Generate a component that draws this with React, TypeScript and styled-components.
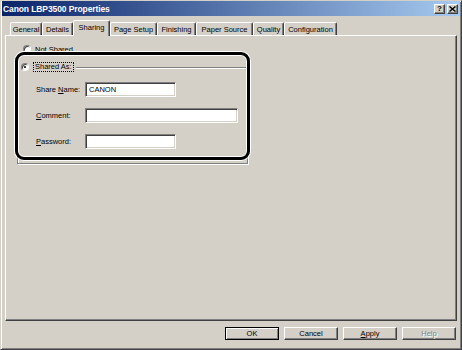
import styled, { createGlobalStyle } from "styled-components";

const GlobalStyle = createGlobalStyle`
  html, body {
    margin: 0;
    padding: 0;
    background: #d4d0c8;
  }
  body {
    font-family: "Liberation Sans", Arial, sans-serif;
    font-size: 7.5px;
    color: #000;
  }
`;

const tabs = [
  { label: "General", w: 32 },
  { label: "Details", w: 31 },
  { label: "Sharing", w: 37, active: true },
  { label: "Page Setup", w: 47 },
  { label: "Finishing", w: 39 },
  { label: "Paper Source", w: 57 },
  { label: "Quality", w: 31 },
  { label: "Configuration", w: 53 },
];

const App = () => {
  return (
    <>
      <GlobalStyle />
      <Window>
        <TitleBar>
          <Title>Canon LBP3500 Properties</Title>
          <TitleButtons>
            <CaptionButton>?</CaptionButton>
            <CaptionButton>
              <svg width="7" height="6" viewBox="0 0 7 6">
                <path d="M0.5 0.5 L6.5 5.5 M6.5 0.5 L0.5 5.5" stroke="#000" strokeWidth="1.4" />
              </svg>
            </CaptionButton>
          </TitleButtons>
        </TitleBar>

        <TabRow>
          {tabs.map((t) => (
            <Tab key={t.label} $w={t.w} $active={!!t.active}>
              {t.label}
            </Tab>
          ))}
        </TabRow>

        <Panel>
          <RadioRow>
            <Radio />
            <span>Not Shared</span>
          </RadioRow>

          <Group>
            <Legend>
              <Radio $checked />
              <Focus>Shared As:</Focus>
            </Legend>
            <FieldGrid>
              <FieldLabel>
                Share <u>N</u>ame:
              </FieldLabel>
              <TextBox $w={91}>CANON</TextBox>
              <FieldLabel>
                <u>C</u>omment:
              </FieldLabel>
              <TextBox $w={153} />
              <FieldLabel>
                <u>P</u>assword:
              </FieldLabel>
              <TextBox $w={91} />
            </FieldGrid>
          </Group>

          <Callout />
        </Panel>

        <ButtonRow>
          <Button $default>OK</Button>
          <Button>Cancel</Button>
          <Button>
            <u>A</u>pply
          </Button>
          <Button $disabled>Help</Button>
        </ButtonRow>
      </Window>
    </>
  );
};

const Window = styled.div`
  width: 462px;
  height: 350px;
  box-sizing: border-box;
  background: #d4d0c8;
  border: 1px solid;
  border-color: #d4d0c8 #404040 #404040 #d4d0c8;
  box-shadow: inset 1px 1px 0 #ffffff, inset -1px -1px 0 #808080;
  padding: 0 1px 1px 1px;
  display: flex;
  flex-direction: column;
`;

const TitleBar = styled.div`
  height: 15px;
  display: flex;
  align-items: center;
  padding: 0 2px 0 1px;
  background: linear-gradient(to right, #0a246a, #a6caf0);
`;

const Title = styled.div`
  color: #fff;
  font-weight: bold;
  font-size: 8.5px;
  letter-spacing: -0.1px;
`;

const TitleButtons = styled.div`
  margin-left: auto;
  display: flex;
  gap: 2px;
`;

const CaptionButton = styled.div`
  width: 11px;
  height: 10px;
  box-sizing: border-box;
  background: #d4d0c8;
  border: 1px solid;
  border-color: #fff #404040 #404040 #fff;
  box-shadow: inset -1px -1px 0 #808080;
  display: flex;
  align-items: center;
  justify-content: center;
  font-weight: bold;
  font-size: 8px;
  line-height: 1;
`;

const TabRow = styled.div`
  margin-top: 4px;
  padding-left: 8px;
  height: 15px;
  display: flex;
  align-items: flex-end;
  position: relative;
  z-index: 1;
`;

const Tab = styled.div<{ $w: number; $active: boolean }>`
  width: ${(p) => p.$w}px;
  height: ${(p) => (p.$active ? 16 : 13)}px;
  margin-bottom: ${(p) => (p.$active ? -1 : 0)}px;
  box-sizing: border-box;
  background: #d4d0c8;
  border: 1px solid;
  border-bottom: none;
  border-color: #fff #404040 transparent #fff;
  border-radius: 2px 2px 0 0;
  box-shadow: inset -1px 0 0 #808080;
  display: flex;
  align-items: ${(p) => (p.$active ? "flex-start" : "center")};
  padding-top: ${(p) => (p.$active ? 2 : 0)}px;
  justify-content: center;
  white-space: nowrap;
`;

const Panel = styled.div`
  position: relative;
  margin: 0 3px;
  height: 286px;
  box-sizing: border-box;
  border: 1px solid;
  border-color: #fff #404040 #404040 #fff;
  box-shadow: inset -1px -1px 0 #808080;
`;

const RadioRow = styled.div`
  margin: 8px 0 0 17px;
  height: 10px;
  display: flex;
  align-items: center;
  gap: 4px;
`;

const Radio = styled.span<{ $checked?: boolean }>`
  width: 8px;
  height: 8px;
  box-sizing: border-box;
  border-radius: 50%;
  background: #fff;
  border: 1px solid;
  border-color: #808080 #fff #fff #808080;
  box-shadow: inset 1px 1px 0 #404040;
  position: relative;
  flex: none;
  &::after {
    content: "";
    display: ${(p) => (p.$checked ? "block" : "none")};
    position: absolute;
    left: 2px;
    top: 2px;
    width: 2px;
    height: 2px;
    border-radius: 50%;
    background: #000;
  }
`;

const Group = styled.fieldset`
  margin: 8px 0 0 11px;
  width: 231px;
  box-sizing: border-box;
  padding: 0;
  border: 1px solid #808080;
  box-shadow: 1px 1px 0 #fff, inset 1px 1px 0 #fff;
`;

const Legend = styled.legend`
  display: flex;
  align-items: center;
  gap: 4px;
  height: 10px;
  padding: 0 2px 0 3px;
  margin: 0;
  background: #d4d0c8;
  position: relative;
`;

const Focus = styled.span`
  border: 1px dotted #000;
  padding: 0 1px;
  line-height: 8px;
`;

const FieldGrid = styled.div`
  display: grid;
  grid-template-columns: 49px auto;
  row-gap: 11px;
  align-items: center;
  justify-items: start;
  padding: 10px 0 14px 18px;
`;

const FieldLabel = styled.span`
  white-space: nowrap;
`;

const TextBox = styled.div<{ $w: number }>`
  width: ${(p) => p.$w}px;
  height: 15px;
  box-sizing: border-box;
  background: #fff;
  border: 1px solid;
  border-color: #808080 #fff #fff #808080;
  box-shadow: inset 1px 1px 0 #404040, inset -1px -1px 0 #d4d0c8;
  padding: 0 3px;
  display: flex;
  align-items: center;
`;

const Callout = styled.div`
  position: absolute;
  left: 9px;
  top: 16px;
  width: 235px;
  height: 108px;
  box-sizing: border-box;
  border: 3.5px solid #000;
  border-radius: 9px;
  box-shadow: 0 0 0 1px #fff, inset 0 0 0 1px #fff;
  pointer-events: none;
`;

const ButtonRow = styled.div`
  display: flex;
  justify-content: flex-end;
  gap: 5px;
  margin-top: 6px;
  padding-right: 4px;
`;

const Button = styled.div<{ $default?: boolean; $disabled?: boolean }>`
  width: 54px;
  height: 13px;
  box-sizing: border-box;
  border: 1px solid;
  border-color: ${(p) => (p.$default ? "#000" : "#fff #404040 #404040 #fff")};
  box-shadow: ${(p) =>
    p.$default
      ? "inset 1px 1px 0 #fff, inset -1px -1px 0 #808080"
      : "inset -1px -1px 0 #808080"};
  display: flex;
  align-items: center;
  justify-content: center;
  color: ${(p) => (p.$disabled ? "#808080" : "#000")};
  text-shadow: ${(p) => (p.$disabled ? "1px 1px 0 #fff" : "none")};
`;

export default App;
